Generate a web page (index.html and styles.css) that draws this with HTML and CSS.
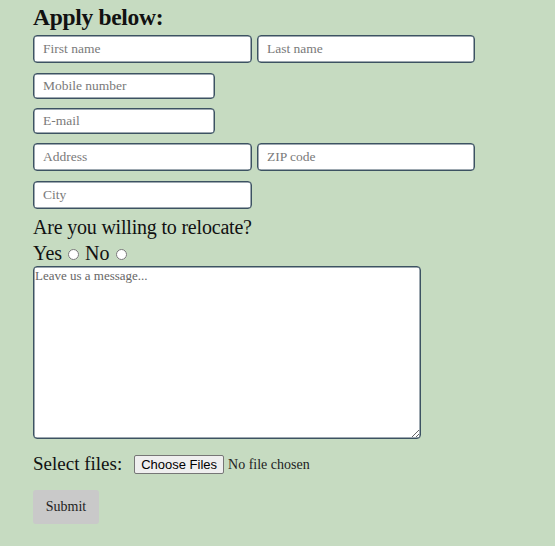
FILE: index.html
```html
<!DOCTYPE html>
<html lang="en">
<head>
<meta charset="utf-8">
<title>Apply</title>
<link rel="stylesheet" href="styles.css">
</head>
<body>
<form class="apply">
  <h2 class="title">Apply below:</h2>
  <div class="row row-tall">
    <input class="field wide" type="text" placeholder="First name">
    <input class="field wide" type="text" placeholder="Last name">
  </div>
  <div class="row row-short">
    <input class="field narrow" type="tel" placeholder="Mobile number">
  </div>
  <div class="row row-short">
    <input class="field narrow" type="email" placeholder="E-mail">
  </div>
  <div class="row row-tall">
    <input class="field wide" type="text" placeholder="Address">
    <input class="field wide" type="text" placeholder="ZIP code">
  </div>
  <div class="row row-tall">
    <input class="field wide" type="text" placeholder="City">
  </div>
  <p class="question">Are you willing to relocate?</p>
  <div class="choices">
    <label class="choice">Yes <input type="radio" name="relocate"></label>
    <label class="choice">No <input type="radio" name="relocate"></label>
  </div>
  <textarea class="message" placeholder="Leave us a message..."></textarea>
  <div class="files">
    <span class="files-label">Select files:</span>
    <input class="file" type="file" multiple>
  </div>
  <button class="submit" type="button">Submit</button>
</form>
</body>
</html>
```
FILE: styles.css
```css
html, body {
  margin: 0;
  padding: 0;
  background: #c6dbc1;
}
body {
  font-family: "Liberation Serif", "Times New Roman", serif;
  color: #111;
  height: 546px;
}
.apply {
  display: flex;
  flex-direction: column;
  align-items: flex-start;
  padding: 3px 0 0 33px;
}
.title {
  margin: 0;
  font-size: 23.5px;
  line-height: 28px;
  font-weight: bold;
  letter-spacing: -0.3px;
}
.row {
  display: flex;
  gap: 5px;
}
.row-tall { height: 28px; margin-top: 4px; margin-bottom: 6px; }
.row-short { height: 26px; margin-top: 4px; margin-bottom: 5px; }
.field {
  box-sizing: border-box;
  height: 100%;
  border: 1px solid #3c5262;
  box-shadow: inset 0 0 0 0.5px #3c5262;
  border-radius: 4px;
  background: #fff;
  padding: 0 9px;
  font-family: "Liberation Serif", serif;
  font-size: 13.5px;
  color: #222;
  outline: none;
}
.field::placeholder { color: #7a7a7a; }
.wide { width: 219px; }
.wide + .wide { width: 218px; }
.narrow { width: 182px; }
.question {
  margin: 0;
  font-size: 20px;
  line-height: 24px;
  letter-spacing: -0.2px;
}
.choices {
  display: flex;
  gap: 6px;
  font-size: 20px;
  line-height: 22px;
  margin-top: 3px;
}
.choice {
  display: flex;
  align-items: center;
  gap: 6px;
}
.choice input {
  margin: 2px 0 0 0;
  width: 11px;
  height: 11px;
}
.message {
  box-sizing: border-box;
  width: 388px;
  height: 173px;
  margin: 2px 0 0 0;
  border: 1px solid #3c5262;
  box-shadow: inset 0 0 0 0.5px #3c5262;
  border-radius: 4px;
  padding: 1px 1px;
  font-family: "Liberation Serif", serif;
  font-size: 13px;
  resize: vertical;
  outline: none;
}
.message::placeholder { color: #666; }
.files {
  display: flex;
  align-items: center;
  margin-top: 13px;
  height: 24px;
}
.files-label {
  font-size: 19px;
  margin-right: 12px;
}
.file {
  font-family: "Liberation Serif", serif;
  font-size: 14px;
  color: #222;
}
.file::file-selector-button {
  font-family: "Liberation Sans", Arial, sans-serif;
  font-size: 13px;
  padding: 1px 6px;
  margin-right: 4px;
  background: #efefef;
  border: 1px solid #767676;
  border-radius: 2px;
  color: #000;
}
.submit {
  margin-top: 14px;
  width: 66px;
  height: 34px;
  border: none;
  border-radius: 3px;
  background: #c9c9c9;
  font-family: "Liberation Serif", serif;
  font-size: 14px;
  color: #222;
}
```
